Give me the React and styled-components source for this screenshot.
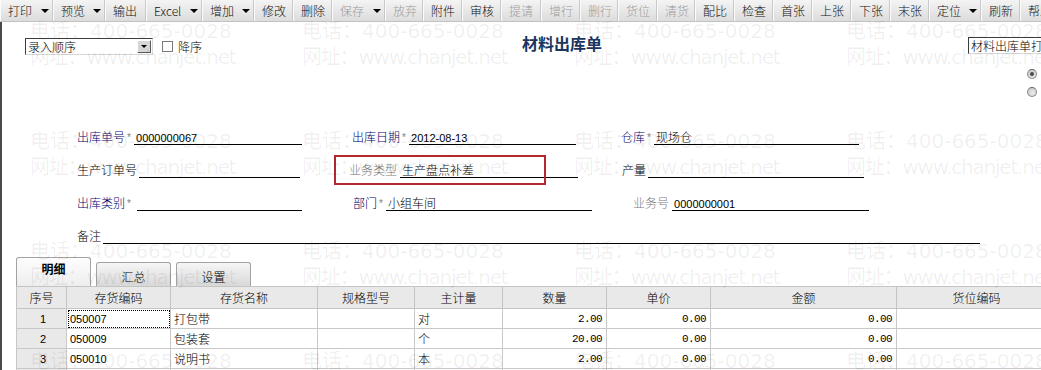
import React from 'react';
import styled, { createGlobalStyle } from 'styled-components';

const GlobalStyle = createGlobalStyle`
  html, body {
    margin: 0;
    padding: 0;
    background: #ffffff;
  }
  body {
    font-family: "Noto Sans CJK SC", "Liberation Sans", sans-serif;
    font-size: 12px;
    font-weight: 300;
    color: #000;
  }
`;

const Screen = styled.div`
  position: relative;
  width: 1041px;
  height: 370px;
  overflow: hidden;
  background: #ffffff;
  display: flex;
  flex-direction: column;
`;

const Toolbar = styled.div`
  display: flex;
  flex-shrink: 0;
  height: 22px;
  box-sizing: border-box;
  background: linear-gradient(#f4f4f4, #dcdcdc);
  border-bottom: 1px solid #c2c2c2;
`;

const ToolButton = styled.div`
  display: flex;
  align-items: center;
  flex-shrink: 0;
  box-sizing: border-box;
  width: ${p => p.$w}px;
  padding-left: 7px;
  border-left: 1px solid #fbfbfb;
  border-right: 1px solid #c8c8c8;
  color: ${p => (p.$off ? '#9b9b9b' : '#111')};
  font-family: "Noto Sans CJK SC", sans-serif;
  font-size: 12px;
  line-height: 14px;
  white-space: nowrap;
`;

const Caret = styled.span`
  margin-left: auto;
  margin-right: 3px;
  width: 0;
  height: 0;
  border-left: 4px solid transparent;
  border-right: 4px solid transparent;
  border-top: 4px solid #000;
`;

const Body = styled.div`
  flex: 1;
  display: flex;
  flex-direction: column;
  border-left: 2px solid #4a4a4a;
`;

const TopBar = styled.div`
  display: grid;
  grid-template-columns: 520px 1fr 73px;
  height: 90px;
  padding-top: 16px;
  box-sizing: border-box;
  flex-shrink: 0;
`;

const SortGroup = styled.div`
  display: flex;
  align-items: center;
  align-self: start;
  height: 17px;
  padding-left: 23px;
`;

const SelectBox = styled.div`
  display: flex;
  align-items: center;
  flex-shrink: 0;
  box-sizing: border-box;
  width: ${p => p.$w}px;
  height: 17px;
  padding-left: 2px;
  background: #fff;
  border-style: solid;
  border-width: 1px;
  border-color: #3c3c3c #d8d8d8 #d8d8d8 #3c3c3c;
  font-family: "Noto Sans CJK SC", sans-serif;
  font-size: 12px;
  line-height: 14px;
  white-space: nowrap;
  overflow: hidden;
`;

const DropButton = styled.span`
  display: flex;
  align-items: center;
  justify-content: center;
  margin-left: auto;
  margin-right: 1px;
  width: 14px;
  height: 13px;
  box-sizing: border-box;
  background: #d6d6d6;
  border-style: solid;
  border-width: 1px;
  border-color: #ffffff #5a5a5a #5a5a5a #ffffff;

  &::after {
    content: '';
    border-left: 3px solid transparent;
    border-right: 3px solid transparent;
    border-top: 3px solid #000;
  }
`;

const CheckBox = styled.span`
  width: 11px;
  height: 11px;
  margin-left: 9px;
  box-sizing: border-box;
  background: #fff;
  border: 1px solid #7a7a7a;
`;

const CheckLabel = styled.span`
  margin-left: 5px;
  font-family: "Noto Sans CJK SC", sans-serif;
  font-size: 12px;
  line-height: 14px;
`;

const Title = styled.h1`
  align-self: start;
  margin: -5px 0 0;
  color: #1a3560;
  font-family: "Noto Sans CJK SC", sans-serif;
  font-size: 16px;
  font-weight: 700;
  line-height: 20px;
`;

const RightColumn = styled.div`
  display: flex;
  flex-direction: column;
  align-self: start;
  margin-top: -1px;
`;

const RadioStack = styled.div`
  display: flex;
  flex-direction: column;
  gap: 8px;
  margin: 15px 0 0 59px;
`;

const Radio = styled.span`
  position: relative;
  width: 10px;
  height: 10px;
  box-sizing: border-box;
  border-radius: 50%;
  border: 1px solid #8c8c8c;
  border-top-color: #6a6a6a;
  background: radial-gradient(circle at 60% 60%, #ececec, #bdbdbd);

  &::after {
    content: '';
    display: ${p => (p.$on ? 'block' : 'none')};
    position: absolute;
    left: 2px;
    top: 2px;
    width: 4px;
    height: 4px;
    border-radius: 50%;
    background: #4a4a4a;
  }
`;

const FormRow = styled.div`
  display: flex;
  align-items: flex-end;
  flex-shrink: 0;
  height: 33px;
`;

const Field = styled.div`
  position: relative;
  display: flex;
  align-items: flex-end;
  margin-left: ${p => p.$ml}px;
`;

const labelTones = { req: '#00006a', ro: '#7a7a7a', plain: '#000' };

const Label = styled.span`
  margin-bottom: 1px;
  color: ${p => labelTones[p.$tone]};
  font-family: "Noto Sans CJK SC", sans-serif;
  font-size: 12px;
  line-height: 14px;
  white-space: nowrap;
`;

const Star = styled.span`
  align-self: flex-end;
  box-sizing: border-box;
  width: ${p => p.$w}px;
  height: 15px;
  padding: 3px 0 0 2px;
  color: #808080;
  font-family: "Liberation Sans", sans-serif;
  font-size: 10px;
  line-height: 10px;
`;

const Line = styled.div`
  box-sizing: border-box;
  width: ${p => p.$w}px;
  height: 15px;
  margin-left: ${p => p.$gap}px;
  padding-left: 2px;
  border-bottom: 1px solid #000;
  font-size: 12px;
  line-height: 14px;
  white-space: nowrap;
`;

const Value = styled.span`
  font-family: ${p => (p.$num ? '"Liberation Sans"' : '"Noto Sans CJK SC"')}, sans-serif;
  font-size: ${p => (p.$num ? 11 : 12)}px;
  font-weight: ${p => (p.$num ? 400 : 300)};
`;

const Highlight = styled.div`
  position: absolute;
  left: -15px;
  top: -8px;
  width: 212px;
  height: 30px;
  box-sizing: border-box;
  border: 2px solid #b3282d;
  pointer-events: none;
`;

const TabStrip = styled.div`
  display: flex;
  align-items: flex-end;
  gap: 5px;
  flex-shrink: 0;
  height: 29px;
  margin-top: 13px;
  padding-left: 14px;
`;

const Tab = styled.div`
  box-sizing: border-box;
  width: 75px;
  height: ${p => (p.$active ? 29 : 24)}px;
  padding-top: ${p => (p.$active ? 4 : 7)}px;
  border: 1px solid #a2a2a2;
  border-bottom: none;
  border-radius: 3px 3px 0 0;
  background: ${p => (p.$active
    ? 'linear-gradient(#fdfdfd, #eeeeee)'
    : 'linear-gradient(#f6f6f6, #d8d8d8)')};
  text-align: center;
  font-family: "Noto Sans CJK SC", sans-serif;
  font-size: 12px;
  font-weight: ${p => (p.$active ? 700 : 300)};
  line-height: 14px;
`;

const GridWrap = styled.div`
  margin-left: 14px;
  flex-shrink: 0;
`;

const Grid = styled.table`
  border-collapse: collapse;
  table-layout: fixed;
  width: 1040px;
`;

const Th = styled.th`
  height: 21px;
  padding: 0;
  background: #e9e9e9;
  border: 1px solid #c4c4c4;
  font-family: "Noto Sans CJK SC", sans-serif;
  font-size: 12px;
  font-weight: 300;
  line-height: 14px;
  text-align: center;
`;

const Td = styled.td`
  height: 19px;
  padding: ${p => (p.$kind === 'num' ? '0 4px 0 0' : '0 0 0 3px')};
  background: ${p => (p.$kind === 'index' ? '#e9e9e9' : '#fff')};
  border: 1px solid #c8c8c8;
  font-family: ${p => (p.$kind === 'num'
    ? '"Liberation Mono"'
    : p.$kind === 'text' ? '"Noto Sans CJK SC"' : '"Liberation Sans"')}, sans-serif;
  font-size: ${p => (p.$kind === 'text' ? 12 : 11)}px;
  font-weight: ${p => (p.$kind === 'text' ? 300 : 400)};
  letter-spacing: ${p => (p.$kind === 'num' ? '-0.6px' : 'normal')};
  line-height: 14px;
  text-align: ${p => (p.$kind === 'num' ? 'right' : p.$kind === 'index' ? 'center' : 'left')};
  white-space: nowrap;
  outline: ${p => (p.$focus ? '1px dotted #000' : 'none')};
  outline-offset: -2px;
`;

const Watermark = styled.div`
  position: absolute;
  inset: 0;
  display: grid;
  grid-template-columns: repeat(4, 272px);
  grid-auto-rows: 110px;
  padding: 18px 0 0 30px;
  pointer-events: none;
  color: rgba(0, 0, 0, 0.065);
  font-family: "DejaVu Sans", "Noto Sans CJK SC", sans-serif;
  font-size: 20px;
  font-weight: 400;
  line-height: 26px;
  white-space: nowrap;
`;

const MarkBlock = styled.div`
  display: flex;
  flex-direction: column;
`;

const MarkSite = styled.span`
  letter-spacing: -1.2px;
`;

const tools = [
  { t: '打印', w: 53, caret: true },
  { t: '预览', w: 52, caret: true },
  { t: '输出', w: 41 },
  { t: 'Excel', w: 56, caret: true },
  { t: '增加', w: 52, caret: true },
  { t: '修改', w: 39 },
  { t: '删除', w: 39 },
  { t: '保存', w: 53, caret: true, off: true },
  { t: '放弃', w: 38, off: true },
  { t: '附件', w: 39 },
  { t: '审核', w: 39 },
  { t: '提请', w: 40, off: true },
  { t: '增行', w: 39, off: true },
  { t: '删行', w: 38, off: true },
  { t: '货位', w: 39, off: true },
  { t: '清货', w: 38, off: true },
  { t: '配比', w: 39 },
  { t: '检查', w: 39 },
  { t: '首张', w: 39 },
  { t: '上张', w: 39 },
  { t: '下张', w: 39 },
  { t: '末张', w: 39 },
  { t: '定位', w: 52, caret: true },
  { t: '刷新', w: 39 },
  { t: '帮助', w: 40 },
];

const formRows = [
  [
    { ml: 75, label: '出库单号', tone: 'req', star: 9, line: 168, value: '0000000067', num: true },
    { ml: 50, label: '出库日期', tone: 'req', star: 9, line: 167, value: '2012-08-13', num: true },
    { ml: 45, label: '仓库', tone: 'req', star: 9, line: 205, value: '现场仓' },
  ],
  [
    { ml: 75, label: '生产订单号', gap: 2, line: 161 },
    { ml: 49, label: '业务类型', tone: 'ro', gap: 3, line: 178, value: '生产盘点补差', mark: true },
    { ml: 44, label: '产量', gap: 2, line: 216 },
  ],
  [
    { ml: 75, label: '出库类别', tone: 'req', star: 12, line: 165 },
    { ml: 51, label: '部门', tone: 'req', star: 9, line: 206, value: '小组车间' },
    { ml: 41, label: '业务号', tone: 'ro', gap: 3, line: 197, value: '0000000001', num: true },
  ],
  [
    { ml: 75, label: '备注', gap: 2, line: 877 },
  ],
];

const columns = [
  { title: '序号', w: 50 },
  { title: '存货编码', w: 104 },
  { title: '存货名称', w: 147 },
  { title: '规格型号', w: 97 },
  { title: '主计量', w: 88 },
  { title: '数量', w: 104 },
  { title: '单价', w: 104 },
  { title: '金额', w: 186 },
  { title: '货位编码', w: 160 },
];

const items = [
  ['1', '050007', '打包带', '', '对', '2.00', '0.00', '0.00', ''],
  ['2', '050009', '包装套', '', '个', '20.00', '0.00', '0.00', ''],
  ['3', '050010', '说明书', '', '本', '2.00', '0.00', '0.00', ''],
  ['', '', '', '', '', '', '', '', ''],
];

const cellKinds = ['index', 'code', 'text', 'text', 'text', 'num', 'num', 'num', 'text'];

export default function App() {
  return (
    <Screen>
      <GlobalStyle />
      <Toolbar>
        {tools.map(tool => (
          <ToolButton key={tool.t} $w={tool.w} $off={tool.off}>
            {tool.t}
            {tool.caret && <Caret />}
          </ToolButton>
        ))}
      </Toolbar>

      <Body>
        <TopBar>
          <SortGroup>
            <SelectBox $w={128}>
              录入顺序
              <DropButton />
            </SelectBox>
            <CheckBox />
            <CheckLabel>降序</CheckLabel>
          </SortGroup>
          <Title>材料出库单</Title>
          <RightColumn>
            <SelectBox $w={96}>材料出库单打印模版</SelectBox>
            <RadioStack>
              <Radio $on />
              <Radio />
            </RadioStack>
          </RightColumn>
        </TopBar>

        {formRows.map((row, i) => (
          <FormRow key={i}>
            {row.map(f => (
              <Field key={f.label} $ml={f.ml}>
                {f.mark && <Highlight />}
                <Label $tone={f.tone || 'plain'}>{f.label}</Label>
                {f.star && <Star $w={f.star}>*</Star>}
                <Line $w={f.line} $gap={f.gap || 0}>
                  {f.value && <Value $num={f.num}>{f.value}</Value>}
                </Line>
              </Field>
            ))}
          </FormRow>
        ))}

        <TabStrip>
          <Tab $active>明细</Tab>
          <Tab>汇总</Tab>
          <Tab>设置</Tab>
        </TabStrip>

        <GridWrap>
          <Grid>
            <colgroup>
              {columns.map(c => <col key={c.title} style={{ width: c.w }} />)}
            </colgroup>
            <thead>
              <tr>
                {columns.map(c => <Th key={c.title}>{c.title}</Th>)}
              </tr>
            </thead>
            <tbody>
              {items.map((row, r) => (
                <tr key={r}>
                  {row.map((cell, c) => (
                    <Td key={c} $kind={cellKinds[c]} $focus={r === 0 && c === 1}>
                      {cell}
                    </Td>
                  ))}
                </tr>
              ))}
            </tbody>
          </Grid>
        </GridWrap>
      </Body>

      <Watermark>
        {Array.from({ length: 16 }).map((_, i) => (
          <MarkBlock key={i}>
            <span>电话：400-665-0028</span>
            <MarkSite>网址：www.chanjet.net</MarkSite>
          </MarkBlock>
        ))}
      </Watermark>
    </Screen>
  );
}
